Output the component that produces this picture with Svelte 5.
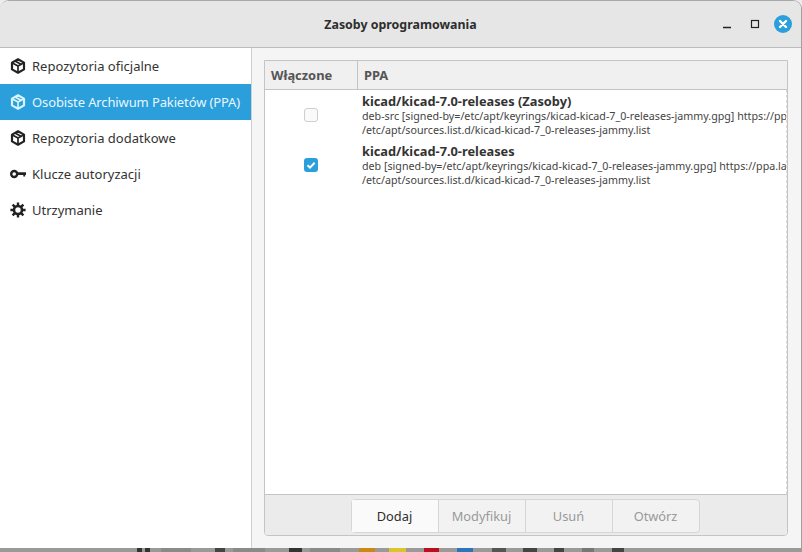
<script>
    const nav = [
        { label: "Repozytoria oficjalne", icon: "box" },
        { label: "Osobiste Archiwum Pakietów (PPA)", icon: "box", active: true },
        { label: "Repozytoria dodatkowe", icon: "box" },
        { label: "Klucze autoryzacji", icon: "key" },
        { label: "Utrzymanie", icon: "gear" }
    ]

    const rows = [
        {
            title: "kicad/kicad-7.0-releases (Zasoby)",
            line: "deb-src [signed-by=/etc/apt/keyrings/kicad-kicad-7_0-releases-jammy.gpg] https://ppa.launchpadcontent.net/kicad/kicad-7.0-releases/ubuntu jammy main",
            file: "/etc/apt/sources.list.d/kicad-kicad-7_0-releases-jammy.list",
            on: false
        },
        {
            title: "kicad/kicad-7.0-releases",
            line: "deb [signed-by=/etc/apt/keyrings/kicad-kicad-7_0-releases-jammy.gpg] https://ppa.launchpadcontent.net/kicad/kicad-7.0-releases/ubuntu jammy main",
            file: "/etc/apt/sources.list.d/kicad-kicad-7_0-releases-jammy.list",
            on: true
        }
    ]

    const actions = [
        { label: "Dodaj", enabled: true },
        { label: "Modyfikuj" },
        { label: "Usuń" },
        { label: "Otwórz" }
    ]

    // odcięty pasek zadań pod oknem: [przerwa, szerokość, kolor]
    const strip = [
        [137, 5, "#333"], [3, 5, "#333"], [11, 30, "#8a8a8a"], [24, 10, "#444"], [8, 32, "#8a8a8a"],
        [24, 13, "#333"], [8, 30, "#8a8a8a"], [19, 16, "#c98a12"], [14, 17, "#d9c52c"],
        [18, 15, "#b8101c"], [18, 16, "#2a76bd"], [19, 14, "#555"], [17, 14, "#444"],
        [17, 10, "#444"], [18, 12, "#777"], [18, 12, "#444"]
    ]
</script>

<div class="screen">
    <div class="window">
        <header class="titlebar">
            <span class="title">Zasoby oprogramowania</span>
            <div class="controls">
                <svg width="14" height="14" viewBox="0 0 14 14"><path d="M1 10.5h8" stroke="#222" stroke-width="1.4" fill="none"/></svg>
                <svg width="14" height="14" viewBox="0 0 14 14"><rect x="3.5" y="3.5" width="7" height="7" stroke="#222" stroke-width="1.2" fill="none"/></svg>
                <svg width="18" height="18" viewBox="0 0 18 18"><circle cx="9" cy="9" r="9" fill="#2a9fdc"/><path d="M6 6l6 6M12 6l-6 6" stroke="#fff" stroke-width="2.4" stroke-linecap="round"/></svg>
            </div>
        </header>

        <div class="body">
            <nav class="sidebar">
                {#each nav as item}
                    <div class="nav-item" class:active={item.active}>
                        {#if item.icon == "box"}
                            <svg class="icon" width="16" height="16" viewBox="0 0 16 16" fill="none" stroke="currentColor" stroke-width="2.2">
                                <path d="M8 1.3l6 3.3v6.8L8 14.7l-6-3.3V4.6z" stroke-linejoin="round"/>
                                <path d="M2.5 5L8 8l5.5-3M8 8v6.5M5 3l6 3.3" stroke-width="1.7"/>
                            </svg>
                        {:else if item.icon == "key"}
                            <svg class="icon" width="16" height="16" viewBox="0 0 16 16" fill="none">
                                <circle cx="4.2" cy="8" r="3" stroke="currentColor" stroke-width="2.4"/>
                                <path d="M6.5 6.3H16.5v2.8h-1.4v1.5h-1.8V9.1H6.5z" fill="currentColor"/>
                            </svg>
                        {:else}
                            <svg class="icon" width="16" height="16" viewBox="0 0 16 16" fill="none" stroke="currentColor">
                                <circle cx="8" cy="8" r="4" stroke-width="2.6"/>
                                <path d="M8 .4v3.2M8 12.4v3.2M.4 8h3.2M12.4 8h3.2M2.6 2.6l2.3 2.3M11.1 11.1l2.3 2.3M13.4 2.6l-2.3 2.3M4.9 11.1l-2.3 2.3" stroke-width="2.4"/>
                            </svg>
                        {/if}
                        <span>{item.label}</span>
                    </div>
                {/each}
            </nav>

            <main class="content">
                <div class="panel">
                    <div class="table-head">
                        <div class="col-on">Włączone</div>
                        <div class="col-ppa">PPA</div>
                    </div>
                    <div class="table-body">
                        {#each rows as row}
                            <div class="row">
                                <div class="check-cell">
                                    {#if row.on}
                                        <span class="check on">
                                            <svg width="14" height="14" viewBox="0 0 14 14"><path d="M3.5 7.2l2.5 2.4 4.6-4.8" stroke="#fff" stroke-width="2" fill="none"/></svg>
                                        </span>
                                    {:else}
                                        <span class="check"></span>
                                    {/if}
                                </div>
                                <div class="info">
                                    <div class="row-title">{row.title}</div>
                                    <div class="row-line">{row.line}</div>
                                    <div class="row-line">{row.file}</div>
                                </div>
                            </div>
                        {/each}
                    </div>
                    <div class="toolbar">
                        <div class="buttons">
                            {#each actions as action}
                                <div class="btn" class:enabled={action.enabled}>{action.label}</div>
                            {/each}
                        </div>
                    </div>
                </div>
            </main>
        </div>
    </div>
    <div class="strip">
        {#each strip as [gap, width, color]}
            <span style="margin-left: {gap}px; width: {width}px; background: {color}"></span>
        {/each}
    </div>
</div>

<style>
    :global(body) {
        background: #ececec;
        overflow: hidden;
    }

    .screen {
        width: 802px;
        height: 552px;
        overflow: hidden;
        font-family: "Noto Sans", "Open Sans", sans-serif;
        color: #2e2e2e;
    }

    .window {
        height: 548px;
        box-sizing: border-box;
        display: flex;
        flex-direction: column;
        border-top: 1px solid #a8a8a8;
        border-right: 1px solid #a0a0a0;
        border-radius: 9px 9px 0 0;
        background: #f5f5f5;
        overflow: hidden;
    }

    .titlebar {
        height: 46px;
        flex: none;
        display: flex;
        align-items: center;
        justify-content: center;
        position: relative;
        background: #e6e6e6;
        border-bottom: 1px solid #bcbcbc;
    }

    .title {
        font-size: 12.4px;
        font-weight: 700;
    }

    .controls {
        position: absolute;
        right: 9px;
        top: 14px;
        display: flex;
        align-items: center;
        gap: 12px;
    }

    .body {
        flex: 1;
        display: flex;
        min-height: 0;
    }

    .sidebar {
        width: 251px;
        flex: none;
        background: #fff;
        border-right: 1px solid #d0d0d0;
    }

    .nav-item {
        height: 36px;
        display: flex;
        align-items: center;
        gap: 6px;
        padding-left: 10px;
        font-size: 13px;
        white-space: nowrap;
        color: #333;
    }

    .nav-item.active {
        background: #2a9fdc;
        color: #e8f6fd;
        letter-spacing: -0.12px;
    }

    .icon {
        flex: none;
        width: 16px;
        height: 16px;
        color: #222;
    }

    .active .icon {
        color: #d8f4fd;
    }

    .content {
        flex: 1;
        min-width: 0;
        padding: 12px 13px 12px 12px;
    }

    .panel {
        height: 100%;
        box-sizing: border-box;
        display: flex;
        flex-direction: column;
        border: 1px solid #c4c4c4;
        border-radius: 0 0 4px 4px;
        overflow: hidden;
    }

    .table-head {
        height: 28px;
        flex: none;
        display: flex;
        align-items: center;
        background: #f0f0f0;
        border-bottom: 1px solid #c4c4c4;
        font-size: 12.9px;
        font-weight: 700;
        color: #555;
    }

    .col-on {
        width: 93px;
        height: 100%;
        box-sizing: border-box;
        display: flex;
        align-items: center;
        padding-left: 6px;
        border-right: 1px solid #c4c4c4;
    }

    .col-ppa {
        padding-left: 6px;
    }

    .table-body {
        flex: 1;
        background: #fff;
        overflow: hidden;
        padding-top: 4px;
        border-right: 1px dashed #ddd;
    }

    .row {
        display: flex;
        height: 50px;
    }

    .check-cell {
        width: 92px;
        flex: none;
        display: flex;
        align-items: flex-start;
        justify-content: center;
        padding-top: 14px;
        box-sizing: border-box;
    }

    .check {
        width: 14px;
        height: 14px;
        display: flex;
        box-sizing: border-box;
        border: 1px solid #cfcfcf;
        border-radius: 3px;
        background: #fafafa;
    }

    .check.on {
        border: none;
        background: #2a9fdc;
    }

    .info {
        padding-left: 5px;
        white-space: nowrap;
    }

    .row-title {
        font-size: 12.8px;
        font-weight: 700;
        line-height: 15px;
        color: #333;
    }

    .row-line {
        font-size: 10.7px;
        line-height: 14px;
        color: #444;
    }

    .toolbar {
        height: 41px;
        flex: none;
        box-sizing: border-box;
        display: flex;
        justify-content: center;
        padding: 4px 2px 0 0;
        background: #ebebeb;
        border-top: 1px solid #c4c4c4;
    }

    .buttons {
        height: 34px;
        display: flex;
        box-sizing: border-box;
        border: 1px solid #d6d6d6;
        border-radius: 4px;
        background: #f2f2f2;
    }

    .btn {
        width: 86px;
        display: flex;
        align-items: center;
        justify-content: center;
        font-size: 12.8px;
        color: #999;
        border-left: 1px solid #d6d6d6;
    }

    .btn:first-child {
        border-left: none;
    }

    .btn.enabled {
        color: #2e2e2e;
        background: #fafafa;
    }

    .strip {
        height: 4px;
        display: flex;
        background: #9a9a9a;
    }

    .strip span {
        flex: none;
        height: 4px;
    }
</style>
